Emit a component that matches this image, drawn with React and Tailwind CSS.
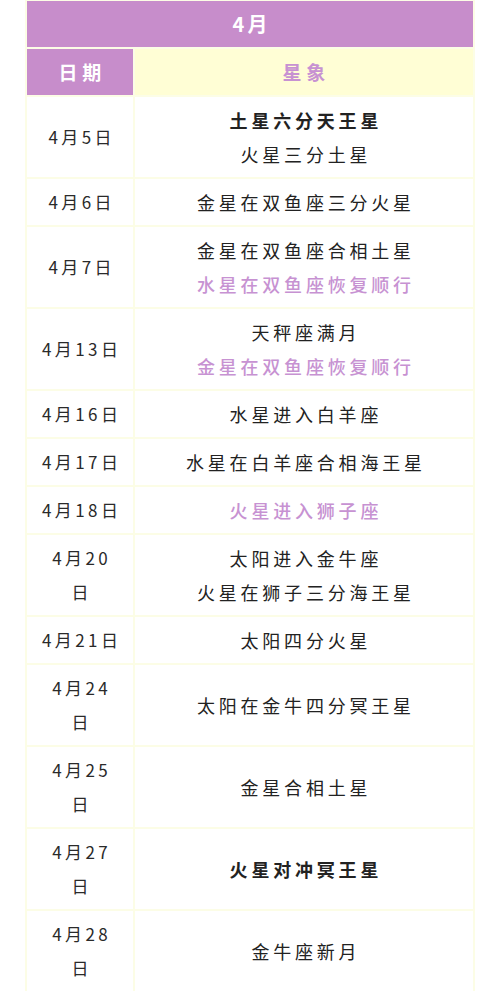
import React from 'react'

const PURPLE = 'text-[#c792d2]'

const rows = [
  { date: ['4月5日'], lines: [{ t: '土星六分天王星', bold: true }, { t: '火星三分土星' }] },
  { date: ['4月6日'], lines: [{ t: '金星在双鱼座三分火星' }] },
  { date: ['4月7日'], lines: [{ t: '金星在双鱼座合相土星' }, { t: '水星在双鱼座恢复顺行', purple: true }] },
  { date: ['4月13日'], lines: [{ t: '天秤座满月' }, { t: '金星在双鱼座恢复顺行', purple: true }] },
  { date: ['4月16日'], lines: [{ t: '水星进入白羊座' }] },
  { date: ['4月17日'], lines: [{ t: '水星在白羊座合相海王星' }] },
  { date: ['4月18日'], lines: [{ t: '火星进入狮子座', purple: true }] },
  { date: ['4月20', '日'], lines: [{ t: '太阳进入金牛座' }, { t: '火星在狮子三分海王星' }] },
  { date: ['4月21日'], lines: [{ t: '太阳四分火星' }] },
  { date: ['4月24', '日'], lines: [{ t: '太阳在金牛四分冥王星' }] },
  { date: ['4月25', '日'], lines: [{ t: '金星合相土星' }] },
  { date: ['4月27', '日'], lines: [{ t: '火星对冲冥王星', bold: true }] },
  { date: ['4月28', '日'], lines: [{ t: '金牛座新月' }] },
]

function Row({ row }) {
  return (
    <div className="grid grid-cols-[106px_1fr] gap-[2px]">
      <div className="bg-white flex flex-col items-center justify-center py-[6px] text-[17px] leading-[34px] tracking-[0.2em] text-[#2a2a2a]">
        {row.date.map((d, i) => (
          <span key={i} className="pl-[0.2em]">{d}</span>
        ))}
      </div>
      <div className="bg-white flex flex-col items-center justify-center py-[6px] text-[18px] leading-[34px] tracking-[3.8px]">
        {row.lines.map((l, i) => (
          <span
            key={i}
            className={
              'pl-[3.8px] ' +
              (l.purple ? PURPLE + ' font-medium' : 'text-[#222222]') +
              (l.bold ? ' font-bold' : '')
            }
          >
            {l.t}
          </span>
        ))}
      </div>
    </div>
  )
}

export default function App() {
  return (
    <div
      className="w-[500px] min-h-[991px] bg-white"
      style={{ fontFamily: '"Noto Sans CJK SC", "Noto Sans", sans-serif' }}
    >
      <div className="mx-auto w-[450px] bg-[#fcfde6] px-[2px] pt-[1px] pb-[2px] flex flex-col gap-[2px]">
        {/* month title */}
        <div className="h-[46px] bg-[#c78dcb] flex items-center justify-center text-white text-[20px] font-semibold tracking-[0.15em] pl-[0.15em]">
          4月
        </div>

        {/* column header */}
        <div className="grid grid-cols-[106px_1fr] gap-[2px] h-[46px]">
          <div className="bg-[#c78dcb] flex items-center justify-center text-white text-[19px] font-bold tracking-[0.25em] pl-[0.25em]">
            日期
          </div>
          <div className="bg-[#fffed5] flex items-center justify-center text-[#c792d2] text-[19px] font-bold tracking-[0.25em] pl-[0.25em]">
            星象
          </div>
        </div>

        {rows.map((r, i) => (
          <Row key={i} row={r} />
        ))}
      </div>
    </div>
  )
}
